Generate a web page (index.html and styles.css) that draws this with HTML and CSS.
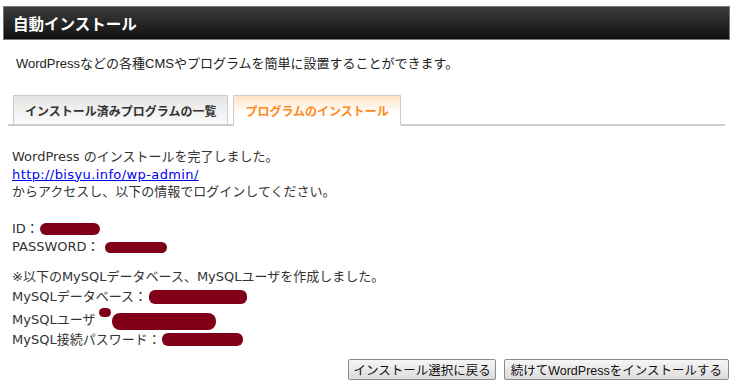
FILE: index.html
```
<!DOCTYPE html>
<html lang="ja">
<head>
    <meta charset="UTF-8">
    <title>自動インストール</title>
    <link rel="stylesheet" href="styles.css">
</head>
<body>
    <div class="page">
        <h1 class="title">自動インストール</h1>
        <p class="lead">WordPressなどの各種CMSやプログラムを簡単に設置することができます。</p>

        <ul class="tabs">
            <li class="tab">インストール済みプログラムの一覧</li>
            <li class="tab active">プログラムのインストール</li>
        </ul>

        <div class="result">
            <p class="block intro">WordPress のインストールを完了しました。<br>
                <a href="#">http://bisyu.info/wp-admin/</a><br>
                からアクセスし、以下の情報でログインしてください。</p>
            <p class="block login">ID：<span class="mask m-id"></span><br>
                PASSWORD：<span class="mask m-pass"></span></p>
            <p class="block db">※以下のMySQLデータベース、MySQLユーザを作成しました。<br>
                MySQLデータベース：<span class="mask m-db"></span><br>
                MySQLユーザ<span class="mask m-dot"></span><span class="mask m-user"></span><br>
                MySQL接続パスワード：<span class="mask m-dbpass"></span></p>
        </div>

        <div class="actions">
            <button type="button">インストール選択に戻る</button>
            <button type="button" class="next">続けてWordPressをインストールする</button>
        </div>
    </div>
</body>
</html>
```

FILE: styles.css
```
body {
    margin: 0;
    background-color: #ffffff;
    font-family: "DejaVu Sans", "Noto Sans CJK JP", sans-serif;
    color: #333333;
}
.page {
    width: 746px;
    height: 387px;
    overflow: hidden;
}
.title {
    margin: 6px 0 0 3px;
    height: 32px;
    line-height: 33px;
    padding: 0 0 0 9px;
    width: 716px;
    background: linear-gradient(#3c3c3c, #101010);
    border: 1px solid #777777;
    color: #ffffff;
    font-family: "Noto Sans CJK JP", sans-serif;
    font-size: 15.5px;
    font-weight: bold;
}
.lead {
    margin: 15px 0 0 16px;
    font-family: "Liberation Sans", "Noto Sans CJK JP", sans-serif;
    font-size: 13px;
    line-height: 18px;
    color: #222222;
}
.tabs {
    list-style: none;
    display: flex;
    gap: 5px;
    margin: 22px 21px 0 8px;
    padding: 0 0 0 5px;
    border-bottom: 2px solid #cccccc;
}
.tab {
    margin-bottom: -2px;
    padding: 0 11px;
    height: 28px;
    line-height: 29px;
    border: 1px solid #cccccc;
    border-bottom: 2px solid #cccccc;
    background: linear-gradient(#e4e4e4, #fbfbfb);
    font-family: "Noto Sans CJK JP", sans-serif;
    font-size: 12px;
    font-weight: bold;
    color: #333333;
}
.tab.active {
    background: linear-gradient(#ffe3c6, #ffffff 60%);
    border-bottom-color: #ffffff;
    color: #ff8a1a;
}
.result {
    padding: 22px 0 0 12px;
    font-size: 13px;
}
.block {
    margin: 0;
}
.intro {
    line-height: 17.5px;
    margin-bottom: 19px;
}
.login {
    line-height: 18px;
    margin-bottom: 11px;
}
.db {
    line-height: 20.5px;
}
.result a {
    color: #0000ee;
    letter-spacing: 0.4px;
}
.mask {
    display: inline-block;
    height: 12px;
    vertical-align: -2px;
    background-color: #800018;
    border-radius: 6px;
}
.m-id {
    width: 60px;
    margin-left: 1px;
}
.m-pass {
    width: 62px;
    height: 11px;
    margin-left: 5px;
}
.m-db {
    width: 98px;
    height: 14px;
    vertical-align: -3px;
    margin-left: 2px;
}
.m-dot {
    width: 12px;
    height: 9px;
    vertical-align: 7px;
    margin-left: 4px;
}
.m-user {
    width: 104px;
    height: 17px;
    vertical-align: -6px;
    border-radius: 8px;
    margin-left: 1px;
}
.m-dbpass {
    width: 81px;
    height: 13px;
    margin-left: 1px;
}
.actions {
    display: flex;
    justify-content: flex-end;
    gap: 8px;
    margin: 8px 17px 0 0;
}
.actions button {
    height: 21px;
    padding: 0 4px;
    background: linear-gradient(#f6f6f6, #dcdcdc);
    border: 1px solid #8a8a8a;
    border-radius: 2px;
    font-family: "Liberation Sans", "Noto Sans CJK JP", sans-serif;
    font-size: 12.5px;
    color: #111111;
}
.actions .next {
    padding: 0 6px;
}
```
